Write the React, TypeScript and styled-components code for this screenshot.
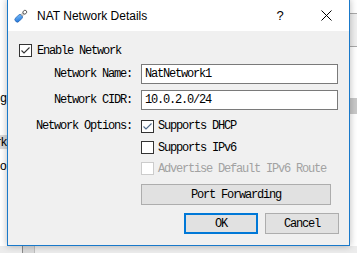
import React from "react";
import styled, { createGlobalStyle } from "styled-components";

const GlobalStyle = createGlobalStyle`
  html, body {
    margin: 0;
    padding: 0;
  }
  body {
    width: 357px;
    height: 253px;
    overflow: hidden;
    background: #ffffff;
  }
`;

const MONO = `"Liberation Mono", "DejaVu Sans Mono", monospace`;
const MONO_SIZE = "12px";
const MONO_SPACING = "-1.2px";

const Desktop = styled.div`
	position: relative;
	width: 357px;
	height: 253px;
	overflow: hidden;
	background: #f4f4f4;
`;

/* window behind the dialog, only its edges show */
const BackWindow = styled.div`
	position: absolute;
	left: -120px;
	top: 0;
	width: 500px;
	height: 246px;
	background: #ffffff;
	display: flex;
	flex-direction: column;
	align-items: flex-start;
`;

const BackLeftColumn = styled.div`
	display: flex;
	flex-direction: column;
	align-items: flex-end;
	width: 127px;
	padding-top: 91px;
	font-family: "Liberation Sans", Arial, sans-serif;
	font-size: 12px;
	color: #000;
`;

const BackItem = styled.div<{ $selected?: boolean; $top: number; $indent?: number }>`
	margin-top: ${(p) => p.$top}px;
	height: 14px;
	line-height: 14px;
	padding-left: 6px;
	background: ${(p) => (p.$selected ? "#d9d9d9" : "transparent")};
	white-space: nowrap;
	${(p) => (p.$indent !== undefined ? `align-self: flex-start; margin-left: ${p.$indent}px; padding-left: 0;` : "")}
`;

const BackRightStrip = styled.div`
	position: absolute;
	left: 350px;
	top: 0;
	width: 7px;
	height: 246px;
	display: flex;
	flex-direction: column;
	background: #ffffff;
`;

const StripBand = styled.div<{ $h: number; $bg: string; $line?: boolean }>`
	height: ${(p) => p.$h}px;
	background: ${(p) => p.$bg};
	border-top: ${(p) => (p.$line ? "1px solid #a9a9a9" : "none")};
	flex-shrink: 0;
`;

const BottomStrip = styled.div`
	position: absolute;
	left: 0;
	top: 246px;
	width: 357px;
	height: 7px;
	background: #ececec;
	display: flex;
	padding-left: 22px;
	box-sizing: border-box;
`;

const Scroller = styled.div`
	width: 11px;
	height: 7px;
	background: #dadada;
	border-left: 1px solid #8a8a8a;
	border-right: 1px solid #bdbdbd;
`;

const Dialog = styled.div`
	position: absolute;
	left: 7px;
	top: -1px;
	width: 343px;
	height: 247px;
	box-sizing: border-box;
	border: 1px solid #1979ca;
	background: #f0f0f0;
	display: flex;
	flex-direction: column;
	box-shadow: 0 0 7px rgba(0, 0, 0, 0.28);
`;

const TitleBar = styled.div`
	height: 31px;
	flex-shrink: 0;
	background: #ffffff;
	display: flex;
	align-items: center;
	padding-left: 5px;
`;

const TitleIcon = styled.div`
	width: 16px;
	height: 16px;
	display: flex;
	align-items: center;
	justify-content: center;
`;

const TitleText = styled.span`
	margin-left: 8px;
	font-family: "Liberation Sans", Arial, sans-serif;
	font-size: 12px;
	color: #000;
	flex: 1;
`;

const CaptionButton = styled.div`
	width: 46px;
	height: 31px;
	display: flex;
	align-items: center;
	justify-content: center;
	font-family: "Liberation Sans", Arial, sans-serif;
	font-size: 13px;
	color: #000;
`;

const Body = styled.div`
	flex: 1;
	padding: 13px 10px 0 11px;
	display: flex;
	flex-direction: column;
`;

const FormRow = styled.div<{ $top: number }>`
	display: grid;
	grid-template-columns: 114px 197px;
	column-gap: 8px;
	align-items: center;
	margin-top: ${(p) => p.$top}px;
`;

const Label = styled.span`
	text-align: right;
	font-family: ${MONO};
	font-size: ${MONO_SIZE};
	letter-spacing: ${MONO_SPACING};
	color: #000;
	white-space: nowrap;
	padding-right: 1px;
`;

const TextField = styled.div`
	height: 20px;
	box-sizing: border-box;
	border: 1px solid #7a7a7a;
	background: #ffffff;
	padding-left: 3px;
	display: flex;
	align-items: center;
	font-family: ${MONO};
	font-size: ${MONO_SIZE};
	letter-spacing: ${MONO_SPACING};
	color: #000;
`;

const CheckRow = styled.label<{ $gap: number; $disabled?: boolean }>`
	display: flex;
	align-items: center;
	gap: ${(p) => p.$gap}px;
	height: 13px;
	font-family: ${MONO};
	font-size: ${MONO_SIZE};
	letter-spacing: ${MONO_SPACING};
	color: ${(p) => (p.$disabled ? "#a2a2a2" : "#000")};
	white-space: nowrap;
`;

const Box = styled.span<{ $disabled?: boolean }>`
	width: 13px;
	height: 13px;
	box-sizing: border-box;
	border: 1px solid ${(p) => (p.$disabled ? "#cccccc" : "#333333")};
	background: #ffffff;
	display: flex;
	align-items: center;
	justify-content: center;
	flex-shrink: 0;
`;

const Button = styled.div<{ $default?: boolean; $width: number }>`
	width: ${(p) => p.$width}px;
	height: 21px;
	box-sizing: border-box;
	border: ${(p) => (p.$default ? "2px solid #0078d7" : "1px solid #adadad")};
	background: #e1e1e1;
	display: flex;
	align-items: center;
	justify-content: center;
	font-family: ${MONO};
	font-size: ${MONO_SIZE};
	letter-spacing: ${MONO_SPACING};
	color: #000;
`;

const ButtonRow = styled.div`
	display: flex;
	justify-content: flex-end;
	gap: 7px;
	margin-top: 8px;
`;

const Check: React.FC<{ color: string }> = ({ color }) => (
	<svg width="11" height="11" viewBox="0 0 11 11">
		<polyline points="1.5,5.5 4,8 9.5,2.5" fill="none" stroke={color} strokeWidth="1.1" />
	</svg>
);

interface CheckboxProps {
	label: string
	checked?: boolean
	disabled?: boolean
	gap?: number
	checkColor?: string
}

const Checkbox: React.FC<CheckboxProps> = ({ label, checked, disabled, gap = 5, checkColor = "#333" }) => (
	<CheckRow $gap={gap} $disabled={disabled}>
		<Box $disabled={disabled}>{checked && <Check color={checkColor} />}</Box>
		<span>{label}</span>
	</CheckRow>
);

const CableIcon = () => (
	<svg width="16" height="16" viewBox="0 0 16 16">
		<defs>
			<linearGradient id="plug" x1="0" y1="0" x2="1" y2="1">
				<stop offset="0" stopColor="#7fc4ff" />
				<stop offset="1" stopColor="#1a6fd6" />
			</linearGradient>
		</defs>
		<g transform="rotate(45 8 8)">
			<rect x="5.6" y="7" width="4.8" height="8.5" rx="2.2" fill="url(#plug)" stroke="#1f5fb0" strokeWidth="0.7" />
			<rect x="7" y="4.2" width="2" height="3" fill="#d8d8d8" stroke="#7a7a7a" strokeWidth="0.5" />
			<ellipse cx="8" cy="2.6" rx="1.8" ry="2" fill="none" stroke="#555" strokeWidth="0.9" />
		</g>
	</svg>
);

const CloseGlyph = () => (
	<svg width="11" height="11" viewBox="0 0 11 11">
		<path d="M0.5 0.5 L10.5 10.5 M10.5 0.5 L0.5 10.5" stroke="#000" strokeWidth="1" />
	</svg>
);

export default function App() {
	return (
		<>
			<GlobalStyle />
			<Desktop>
				<BackWindow>
					<BackLeftColumn>
						<BackItem $top={0}>Setting</BackItem>
						<BackItem $top={30} $selected>Network</BackItem>
						<BackItem $top={10} $indent={112}>Port Forwarding</BackItem>
					</BackLeftColumn>
				</BackWindow>
				<BackRightStrip>
					<StripBand $h={13} $bg="#ffffff" />
					<StripBand $h={32} $bg="#f0f0f0" $line />
					<StripBand $h={51} $bg="#ffffff" $line />
					<StripBand $h={16} $bg="#c9c9c9" />
					<StripBand $h={134} $bg="#ffffff" />
				</BackRightStrip>
				<BottomStrip>
					<Scroller />
				</BottomStrip>

				<Dialog>
					<TitleBar>
						<TitleIcon><CableIcon /></TitleIcon>
						<TitleText>NAT Network Details</TitleText>
						<CaptionButton>?</CaptionButton>
						<CaptionButton><CloseGlyph /></CaptionButton>
					</TitleBar>
					<Body>
						<Checkbox label="Enable Network" checked />
						<FormRow $top={7}>
							<Label>Network Name:</Label>
							<TextField>NatNetwork1</TextField>
						</FormRow>
						<FormRow $top={6}>
							<Label>Network CIDR:</Label>
							<TextField>10.0.2.0/24</TextField>
						</FormRow>
						<FormRow $top={9}>
							<Label>Network Options:</Label>
							<Checkbox label="Supports DHCP" checked gap={4} checkColor="#4f6a8a" />
						</FormRow>
						<FormRow $top={8}>
							<span />
							<Checkbox label="Supports IPv6" gap={4} />
						</FormRow>
						<FormRow $top={8}>
							<span />
							<Checkbox label="Advertise Default IPv6 Route" disabled gap={4} />
						</FormRow>
						<FormRow $top={9}>
							<span />
							<Button $width={190}>Port Forwarding</Button>
						</FormRow>
						<ButtonRow>
							<Button $default $width={74}>OK</Button>
							<Button $width={74}>Cancel</Button>
						</ButtonRow>
					</Body>
				</Dialog>
			</Desktop>
		</>
	);
}
